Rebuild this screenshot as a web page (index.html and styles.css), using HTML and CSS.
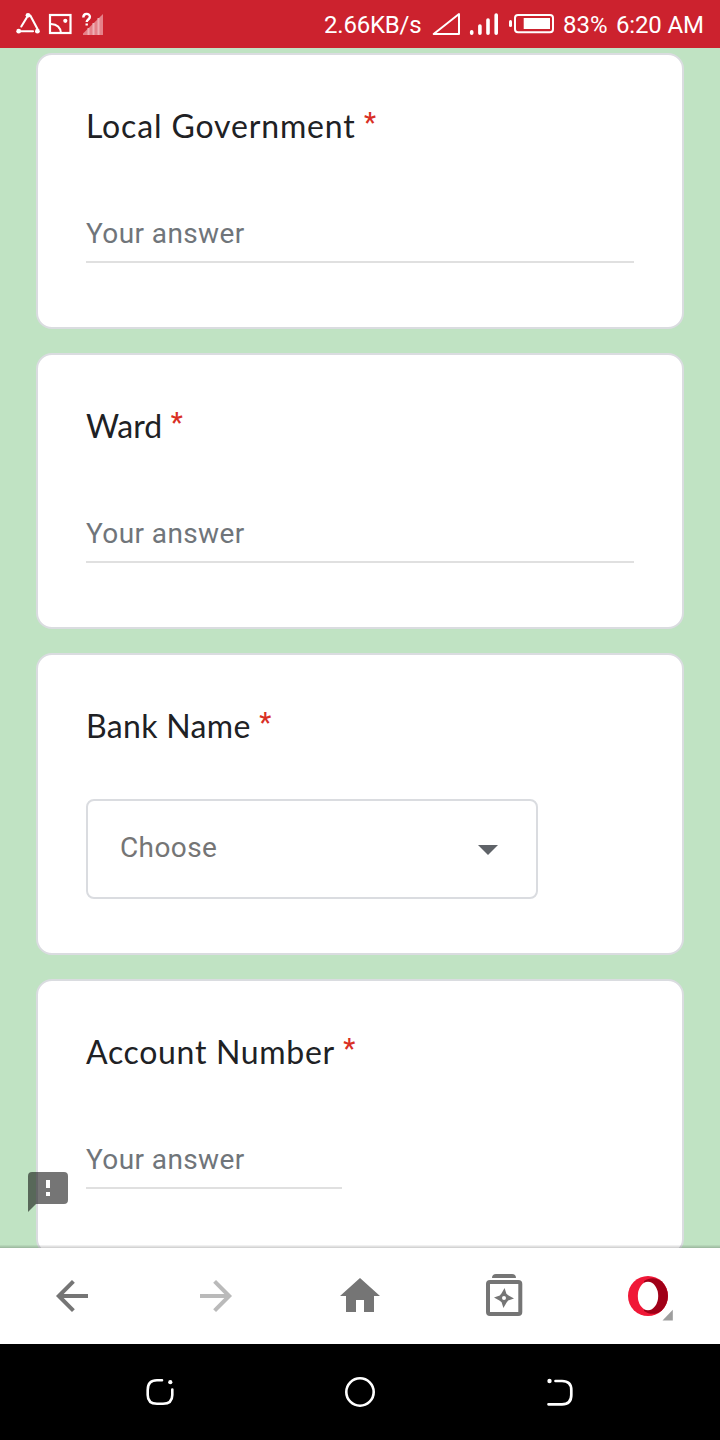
FILE: index.html
```html
<!DOCTYPE html>
<html lang="en">
<head>
<meta charset="utf-8">
<title>Form</title>
<link rel="stylesheet" href="styles.css">
</head>
<body>
<div class="screen">
  <header class="status">
    <svg class="notices" width="90" height="48" viewBox="0 0 90 48" fill="none" stroke="#fff">
      <path d="M10.8 17.5 5.3 26.5M14.3 15.5 21.5 29M5 31.3H17" stroke-width="2.1" stroke-linecap="round"/>
      <g fill="#fff" stroke="none"><circle cx="12" cy="15.3" r="2.4"/><circle cx="2.7" cy="31.2" r="2.4"/><circle cx="21.4" cy="31.2" r="2.4"/></g>
      <rect x="34" y="15" width="20.5" height="18" stroke-width="2.2"/>
      <path d="M35 24c6 .3 9.500 3.800 10 9" stroke-width="2"/>
      <circle cx="49.300" cy="20.800" r="2.100" fill="#fff" stroke="none"/>
      <path d="M67 33.500V35H87V14z" fill="#e58189" stroke="none"/>
      <path d="M72.500 28v7M77.500 23v12M82.500 18v17" stroke="#eeb0b5" stroke-width="2"/>
      <path d="M67.300 17.500c0-4.800 6.600-4.600 6.600-.7 0 2.700-3.200 2.700-3.200 5.700" stroke="#cc222e" stroke-width="5"/>
      <path d="M67.300 17.500c0-4.800 6.600-4.600 6.600-.7 0 2.700-3.200 2.700-3.200 5.200M70.700 23.600v2" stroke-width="2.400"/>
    </svg>
    <span class="speed">2.66KB/s</span>
    <svg class="signals" width="123" height="48" viewBox="0 0 123 48" fill="none" stroke="#fff">
      <path d="M1.700 34 27 14V34Z" stroke-width="2" stroke-linejoin="round"/>
      <path d="M39.700 31.800v1.400M47.900 26v7.200M56 20v13.200M64.200 15v18.200" stroke-width="3.600" stroke-linecap="round"/>
      <path d="M78.500 21.500v4" stroke-width="3" stroke-linecap="round"/>
      <rect x="83" y="15" width="38" height="17.200" rx="3" stroke-width="2"/>
      <rect x="91.700" y="18" width="26.300" height="11" fill="#fff" stroke="none"/>
    </svg>
    <span class="percent">83%</span>
    <span class="clock">6:20 AM</span>
  </header>

  <main class="form">
    <section class="card">
      <h2 class="label label-local">Local Government</h2><span class="star">*</span>
      <div class="answer">Your answer</div>
    </section>
    <section class="card">
      <h2 class="label label-ward">Ward</h2><span class="star">*</span>
      <div class="answer">Your answer</div>
    </section>
    <section class="card card-select">
      <h2 class="label label-bank">Bank Name</h2><span class="star">*</span>
      <div class="select"><span class="choice">Choose</span>
        <svg class="caret" width="20" height="10" viewBox="0 0 20 10"><path d="M0 0h20L10 10z" fill="#5f6368"/></svg>
      </div>
    </section>
    <section class="card">
      <h2 class="label label-account">Account Number</h2><span class="star">*</span>
      <div class="answer answer-short">Your answer</div>
    </section>
    <svg class="report" width="40" height="40" viewBox="0 0 40 40"><path fill="#000" fill-opacity=".54" d="M4 0H36a4 4 0 0 1 4 4V28a4 4 0 0 1-4 4H8L0 40V4a4 4 0 0 1 4-4Z"/><path fill="#fff" d="M18 8h4v8h-4ZM18 20h4v4h-4Z"/></svg>
  </main>

  <nav class="toolbar">
    <svg width="48" height="48" viewBox="0 0 48 48" fill="none" stroke="#757575" stroke-width="4"><path d="M40 24H11M25.400 9.400 10.800 24l14.600 14.600"/></svg>
    <svg width="48" height="48" viewBox="0 0 48 48" fill="none" stroke="#bababa" stroke-width="4"><path d="M8 24H37M22.600 9.400 37.200 24 22.600 38.600"/></svg>
    <svg width="48" height="48" viewBox="0 0 48 48"><path fill="#757575" d="M24 6 44 24H38V40H28V28H20V40H10V24H4Z"/></svg>
    <svg width="48" height="48" viewBox="0 0 48 48">
      <rect x="8" y="10" width="32.300" height="32" rx="2" fill="none" stroke="#757575" stroke-width="4"/>
      <path fill="#757575" d="M12 6c0-2.500 1.500-4 4-4H32c2.500 0 4 1.500 4 4Z"/>
      <path fill="#757575" fill-rule="evenodd" d="M24.600 16 26.400 21.800 28.600 23.400 34 26.600 28.200 28.400 26.600 30.600 23.400 36 21.600 30.200 19.400 28.600 14 25.400 19.800 23.600 21.400 21.400ZM24 24a2 2 0 1 0 0 4 2 2 0 0 0 0-4Z"/>
    </svg>
    <svg width="52" height="52" viewBox="-2 -2 52 52">
      <circle cx="24" cy="24" r="20" fill="#f01837"/>
      <path fill="#a00018" d="M20 9C27 4 34 6.500 37.500 9.300A20 20 0 0 1 37.500 38.700C34 41.500 27 44 20 39Z"/>
      <ellipse cx="24" cy="24" rx="10.200" ry="14.300" fill="#fff"/>
      <path fill="#9e9e9e" d="M48.800 37.800V48.400H38.500Z"/>
    </svg>
  </nav>

  <footer class="system">
    <svg width="48" height="48" viewBox="0 0 48 48" fill="none" stroke="#fff" stroke-width="2.600" stroke-linecap="round"><path d="M26 12.300H21Q11.700 12.300 11.700 22V27Q11.700 35.700 21 35.700H27Q36.300 35.700 36.300 27V21.500"/><circle cx="34.300" cy="14.200" r="2.100" fill="#fff" stroke="none"/></svg>
    <svg width="48" height="48" viewBox="0 0 48 48" fill="none" stroke="#fff" stroke-width="2.600"><circle cx="24" cy="24" r="13.700"/></svg>
    <svg width="48" height="48" viewBox="0 0 48 48" fill="none" stroke="#fff" stroke-width="2.700" stroke-linecap="round"><path d="M19.500 13H26Q35.300 13 35.300 22V27Q35.300 36.300 26 36.300H12.500"/><circle cx="13.500" cy="13" r="2.200" fill="#fff" stroke="none"/></svg>
  </footer>
</div>
</body>
</html>
```
FILE: styles.css
```css
* { box-sizing: border-box; }
body { margin: 0; font-family: Roboto, "Liberation Sans", sans-serif; }
svg { display: block; flex: none; }
.screen { width: 720px; height: 1440px; display: flex; flex-direction: column; overflow: hidden; }

.status { height: 48px; flex: none; display: flex; background: #cc222e; color: #fff; font-size: 24px; line-height: 50px; padding-left: 16px; white-space: nowrap; }
.notices { margin-right: 218px; }
.speed { width: 108px; letter-spacing: -.2px; }
.signals { margin-right: 8px; }
.percent { width: 53px; }
.clock { letter-spacing: -.15px; }

.form { position: relative; height: 1200px; flex: none; overflow: hidden; background: #c0e3c3; padding: 5px 36px 0; display: flex; flex-direction: column; gap: 24px; }
.form::after { content: ""; position: absolute; left: 0; right: 0; bottom: 0; height: 3px; background: linear-gradient(rgba(0,0,0,.03), rgba(0,0,0,.2)); }
.card { flex: none; height: 276px; background: #fff; border: 2px solid #dadce0; border-radius: 16px; padding: 47px 48px; display: grid; grid-template-columns: max-content 1fr; align-content: start; }
.card-select { height: 302px; }
.label { margin: 0; font: 400 32px/48px Lato, sans-serif; color: #202124; }
.label-local { letter-spacing: .85px; }
.label-bank { letter-spacing: .33px; }
.label-account { letter-spacing: .68px; }
.star { font: 500 27px/42px Roboto, sans-serif; color: #d93025; padding-left: 8.5px; }
.answer { grid-column: 1 / -1; margin-top: 64px; height: 49px; line-height: 40px; font-size: 28px; letter-spacing: .4px; color: #70757a; border-bottom: 2px solid #e0e0e0; }
.answer-short { width: 256px; }
.select { grid-column: 1 / -1; margin-top: 49px; width: 452px; height: 100px; border: 2px solid #dadce0; border-radius: 8px; padding: 0 38px 0 32px; display: flex; align-items: center; justify-content: space-between; font-size: 28px; letter-spacing: .4px; color: #757575; }
.choice { padding-bottom: 4px; }
.caret { margin-top: 2px; }
.report { position: absolute; left: 28px; top: 1124px; }

.toolbar { height: 96px; flex: none; background: #fff; display: flex; }
.toolbar, .system { align-items: center; justify-content: space-around; }
.toolbar svg { margin: 0 48px; }
.toolbar svg:last-child { margin: 0 46px; }
.system { height: 96px; flex: none; background: #000; display: flex; padding: 0 60px; }
```
